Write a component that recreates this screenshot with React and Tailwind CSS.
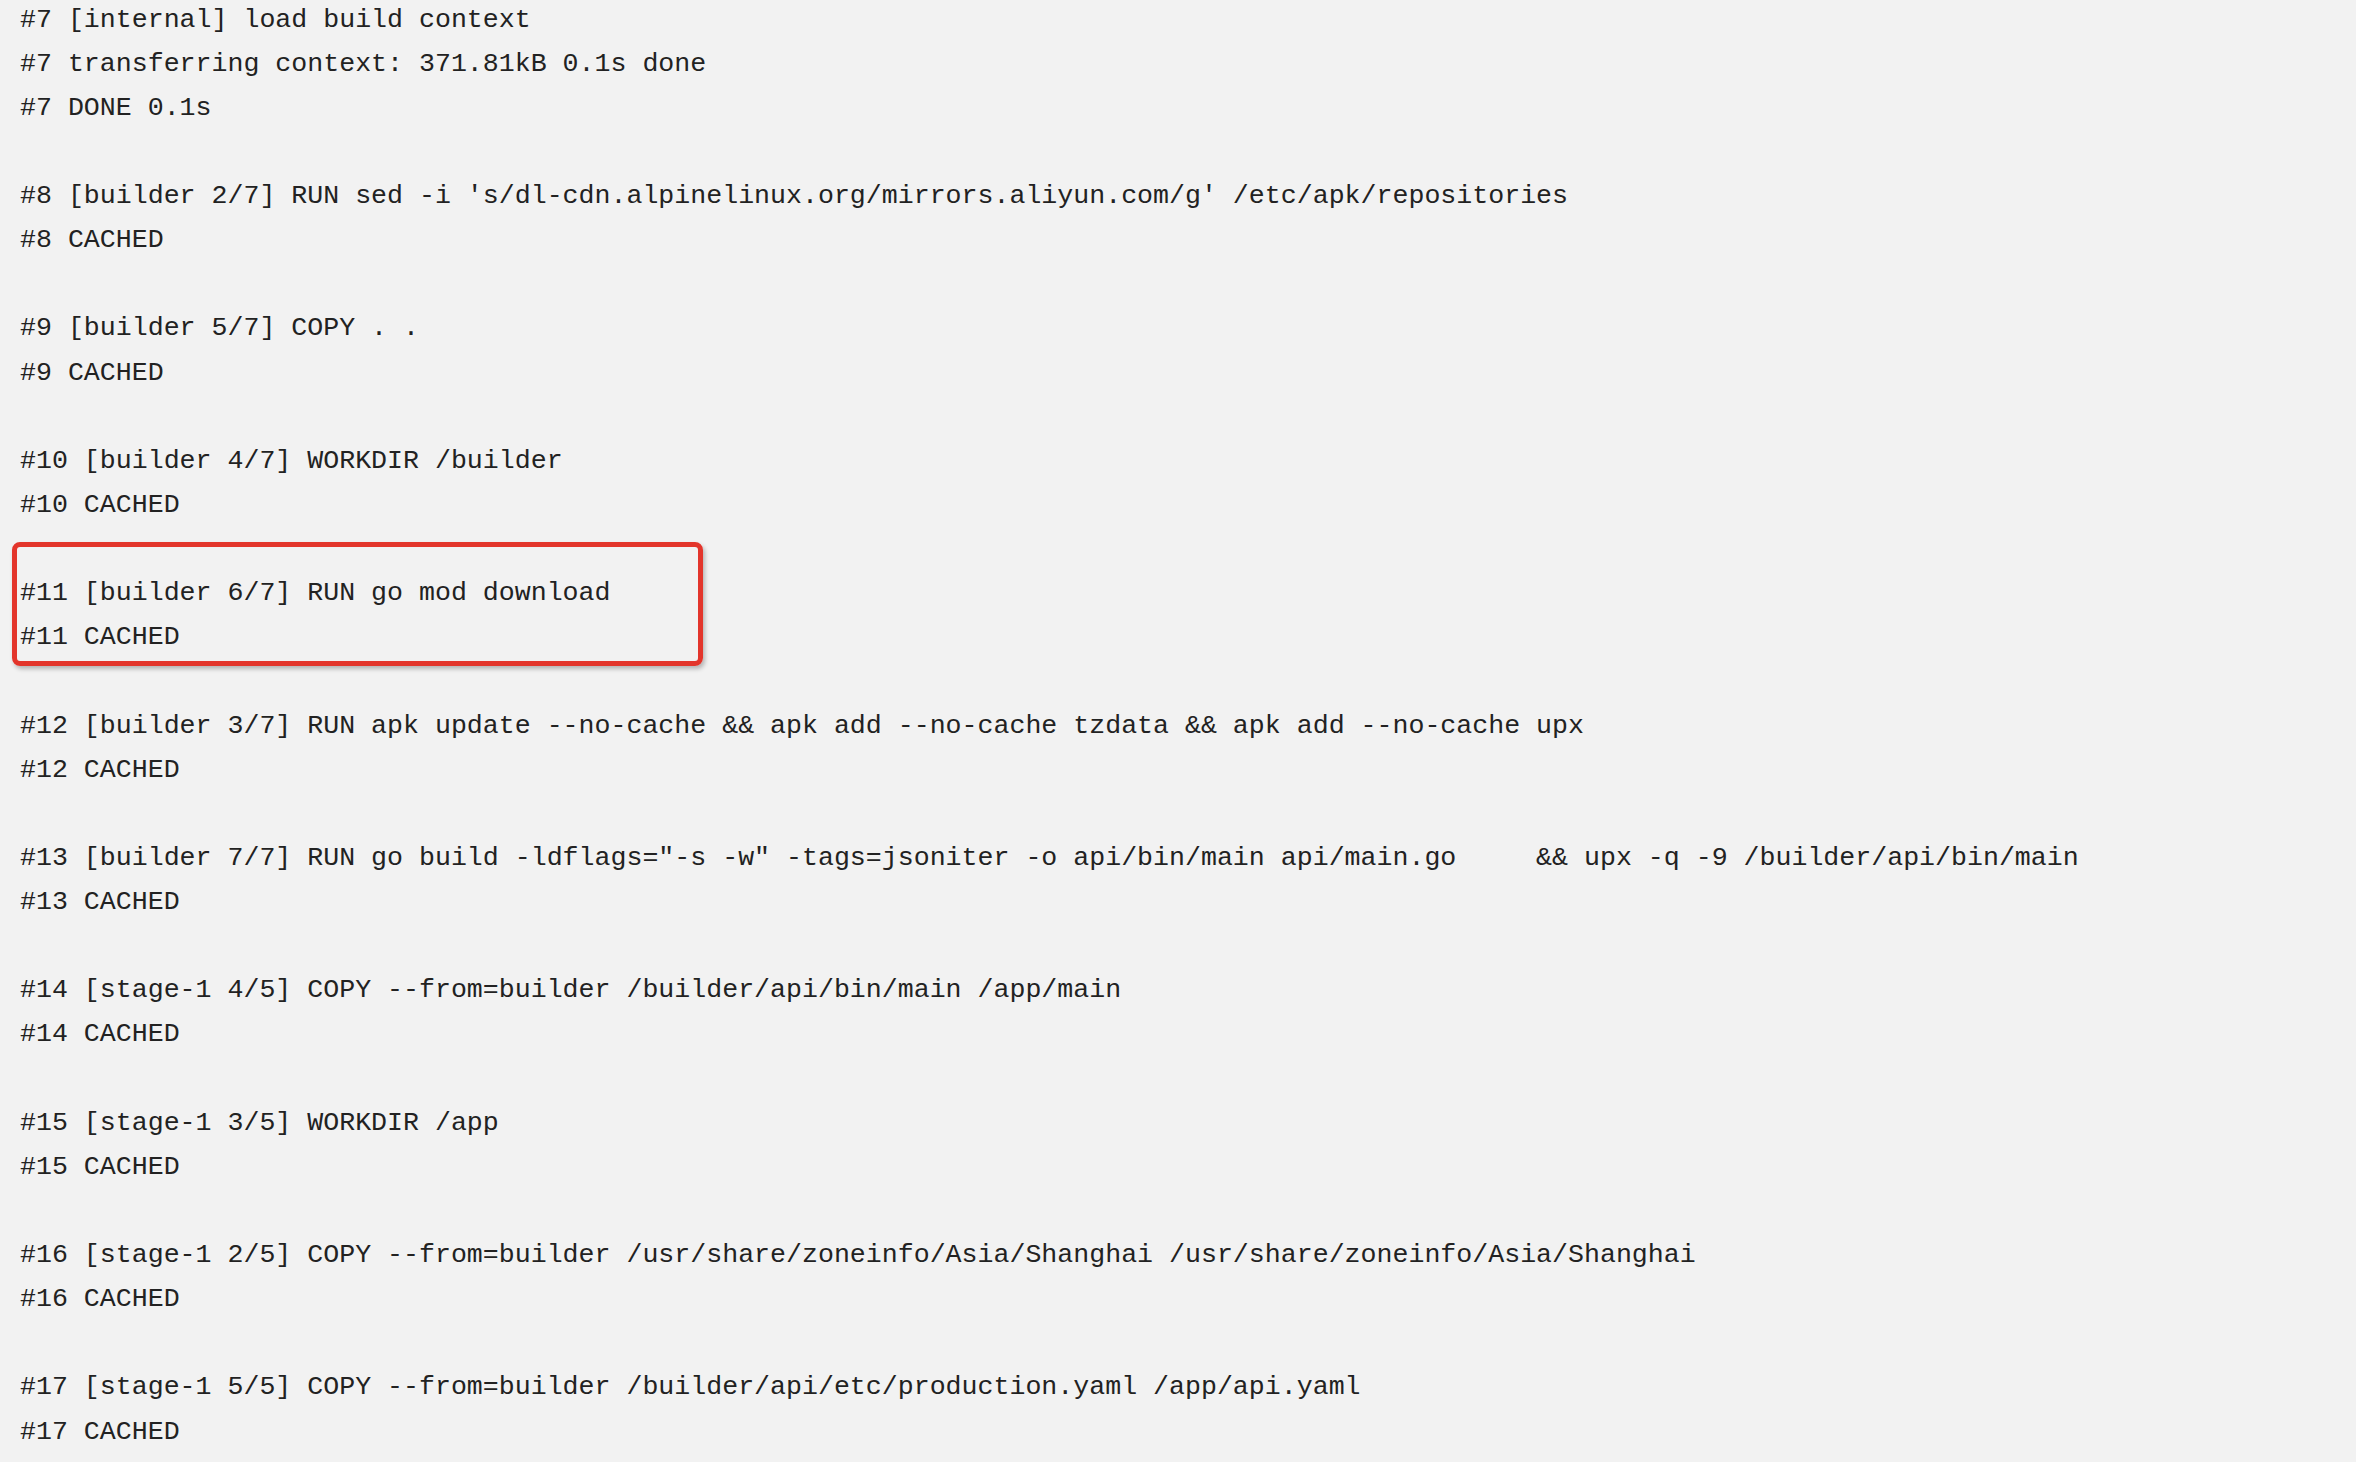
import React from "react";

const lines = [
  "#7 [internal] load build context",
  "#7 transferring context: 371.81kB 0.1s done",
  "#7 DONE 0.1s",
  "",
  "#8 [builder 2/7] RUN sed -i 's/dl-cdn.alpinelinux.org/mirrors.aliyun.com/g' /etc/apk/repositories",
  "#8 CACHED",
  "",
  "#9 [builder 5/7] COPY . .",
  "#9 CACHED",
  "",
  "#10 [builder 4/7] WORKDIR /builder",
  "#10 CACHED",
  "",
  "#11 [builder 6/7] RUN go mod download",
  "#11 CACHED",
  "",
  "#12 [builder 3/7] RUN apk update --no-cache && apk add --no-cache tzdata && apk add --no-cache upx",
  "#12 CACHED",
  "",
  '#13 [builder 7/7] RUN go build -ldflags="-s -w" -tags=jsoniter -o api/bin/main api/main.go     && upx -q -9 /builder/api/bin/main',
  "#13 CACHED",
  "",
  "#14 [stage-1 4/5] COPY --from=builder /builder/api/bin/main /app/main",
  "#14 CACHED",
  "",
  "#15 [stage-1 3/5] WORKDIR /app",
  "#15 CACHED",
  "",
  "#16 [stage-1 2/5] COPY --from=builder /usr/share/zoneinfo/Asia/Shanghai /usr/share/zoneinfo/Asia/Shanghai",
  "#16 CACHED",
  "",
  "#17 [stage-1 5/5] COPY --from=builder /builder/api/etc/production.yaml /app/api.yaml",
  "#17 CACHED",
  "",
];

export default function App() {
  return (
    <div className="relative w-full h-[1462px] overflow-hidden bg-[#f2f2f2]">
      <pre
        className="-mt-[2.5px] pl-[20px] m-0 text-[26.6px] leading-[44.14px] text-[#222222] whitespace-pre"
        style={{ fontFamily: '"Liberation Mono", "Courier New", monospace' }}
      >
        {lines.map((l, i) => (
          <div key={i} className="h-[44.14px]">
            {l}
          </div>
        ))}
      </pre>
      <div className="absolute left-[12px] top-[542px] w-[691px] h-[124px] border-[5px] border-[#e3352b] rounded-[8px] shadow-[2px_3px_4px_rgba(0,0,0,0.25)]" />
    </div>
  );
}
